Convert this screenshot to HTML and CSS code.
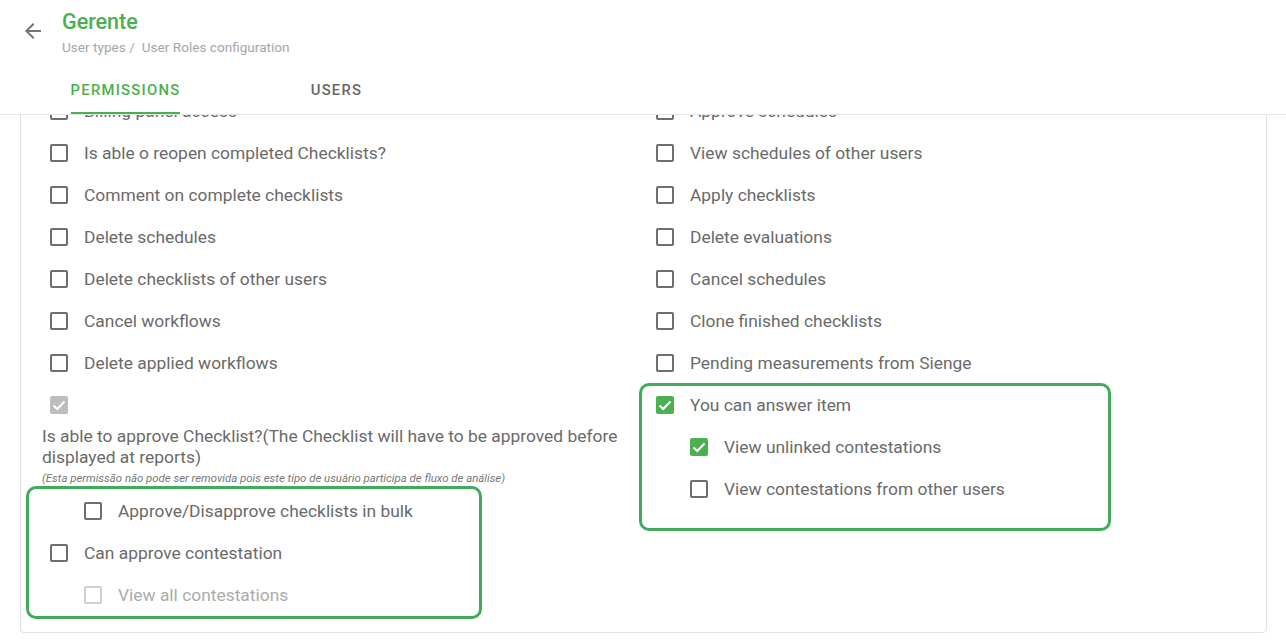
FILE: index.html
```html
<!DOCTYPE html>
<html lang="en">
<head>
<meta charset="utf-8">
<title>Gerente - User Roles configuration</title>
<link rel="stylesheet" href="styles.css">
</head>
<body>
<header class="header">
  <div class="title-bar">
    <button class="back" aria-label="Back">
      <svg width="24" height="24" viewBox="0 0 24 24"><path d="M20 11H7.83l5.59-5.59L12 4l-8 8 8 8 1.41-1.41L7.83 13H20v-2z" fill="currentColor"/></svg>
    </button>
    <div class="titles">
      <h1 class="title">Gerente</h1>
      <div class="crumbs"><span>User types /</span><span class="crumb-current">User Roles configuration</span></div>
    </div>
  </div>
  <nav class="tabs">
    <div class="tab active"><span class="tab-label">PERMISSIONS</span></div>
    <div class="tab"><span class="tab-label">USERS</span></div>
  </nav>
</header>

<main class="scroller">
  <section class="card">
    <div class="columns">
      <div class="col">
        <label class="row"><span class="cb"></span><span class="txt">Billing panel access</span></label>
        <label class="row"><span class="cb"></span><span class="txt">Is able o reopen completed Checklists?</span></label>
        <label class="row"><span class="cb"></span><span class="txt">Comment on complete checklists</span></label>
        <label class="row"><span class="cb"></span><span class="txt">Delete schedules</span></label>
        <label class="row"><span class="cb"></span><span class="txt">Delete checklists of other users</span></label>
        <label class="row"><span class="cb"></span><span class="txt">Cancel workflows</span></label>
        <label class="row"><span class="cb"></span><span class="txt">Delete applied workflows</span></label>
        <div class="row"><span class="cb checked disabled"><svg viewBox="0 0 18 18"><polyline points="3.5,9.5 7.2,13 14.5,5.5"/></svg></span></div>
        <p class="long-label">Is able to approve Checklist?(The Checklist will have to be approved before displayed at reports)</p>
        <p class="note">(Esta permissão não pode ser removida pois este tipo de usuário participa de fluxo de análise)</p>
        <label class="row sub"><span class="cb"></span><span class="txt">Approve/Disapprove checklists in bulk</span></label>
        <label class="row"><span class="cb"></span><span class="txt">Can approve contestation</span></label>
        <label class="row sub"><span class="cb disabled"></span><span class="txt muted">View all contestations</span></label>
      </div>
      <div class="col">
        <label class="row"><span class="cb"></span><span class="txt">Approve schedules</span></label>
        <label class="row"><span class="cb"></span><span class="txt">View schedules of other users</span></label>
        <label class="row"><span class="cb"></span><span class="txt">Apply checklists</span></label>
        <label class="row"><span class="cb"></span><span class="txt">Delete evaluations</span></label>
        <label class="row"><span class="cb"></span><span class="txt">Cancel schedules</span></label>
        <label class="row"><span class="cb"></span><span class="txt">Clone finished checklists</span></label>
        <label class="row"><span class="cb"></span><span class="txt">Pending measurements from Sienge</span></label>
        <label class="row"><span class="cb checked"><svg viewBox="0 0 18 18"><polyline points="3.5,9.5 7.2,13 14.5,5.5"/></svg></span><span class="txt">You can answer item</span></label>
        <label class="row sub"><span class="cb checked"><svg viewBox="0 0 18 18"><polyline points="3.5,9.5 7.2,13 14.5,5.5"/></svg></span><span class="txt">View unlinked contestations</span></label>
        <label class="row sub"><span class="cb"></span><span class="txt">View contestations from other users</span></label>
      </div>
    </div>
    <div class="highlight hl-left"></div>
    <div class="highlight hl-right"></div>
  </section>
</main>
</body>
</html>
```

FILE: styles.css
```css
* { box-sizing: border-box; }

html, body {
  margin: 0;
  padding: 0;
  height: 100%;
  background: #fff;
  font-family: Roboto, "Liberation Sans", Arial, sans-serif;
  color: #666;
  overflow: hidden;
}

.header {
  height: 115px;
  border-bottom: 1px solid #e6e6e6;
  background: #fff;
  display: flex;
  flex-direction: column;
}

.title-bar {
  height: 66px;
  display: flex;
  align-items: flex-start;
}

.back {
  margin: 19px 0 0 21px;
  width: 24px;
  height: 24px;
  padding: 0;
  border: 0;
  background: none;
  color: #757575;
  display: flex;
}

.titles {
  margin-left: 17px;
  padding-top: 9px;
}

.title {
  margin: 0;
  font-size: 21.5px;
  line-height: 26px;
  font-weight: 500;
  color: #4caf50;
}

.crumbs {
  margin-top: 4px;
  font-size: 13.6px;
  line-height: 16px;
  color: #a6a6a6;
  display: flex;
  gap: 7px;
}

.tabs {
  height: 48px;
  display: flex;
  padding-left: 20px;
}

.tab {
  width: 211px;
  display: flex;
  justify-content: center;
}

.tab-label {
  display: flex;
  align-items: center;
  font-size: 14.8px;
  font-weight: 500;
  letter-spacing: 1.25px;
  color: #666;
  padding-top: 2px;
  border-bottom: 2px solid transparent;
}

.tab.active .tab-label {
  color: #4caf50;
  border-bottom-color: #4caf50;
}

.scroller {
  height: 527px;
  overflow: hidden;
}

.card {
  position: relative;
  margin: -41px 19px 0 20px;
  border: 1px solid #e0e0e0;
  border-radius: 4px;
  padding: 15px 16px 16px 21px;
}

.columns {
  display: grid;
  grid-template-columns: 606px 1fr;
}

.col {
  display: flex;
  flex-direction: column;
}

.row {
  height: 42px;
  display: flex;
  align-items: center;
  padding-left: 8px;
}

.row.sub {
  padding-left: 42px;
}

.cb {
  width: 18px;
  height: 18px;
  flex: none;
  border: 2px solid #6e6e6e;
  border-radius: 2px;
  display: flex;
  align-items: center;
  justify-content: center;
}

.cb svg {
  width: 18px;
  height: 18px;
  flex: none;
}

.cb svg polyline {
  fill: none;
  stroke: #fff;
  stroke-width: 2;
}

.cb.checked {
  border: 0;
  background: #4caf50;
}

.cb.checked.disabled {
  background: #bdbdbd;
}

.cb.disabled {
  border-color: #cfcfcf;
}

.txt {
  margin-left: 16px;
  font-size: 17.4px;
  line-height: 21px;
  color: #6a6a6a;
}

.txt.muted {
  color: #ababab;
}

.long-label {
  margin: 0;
  font-size: 17.4px;
  line-height: 21px;
  color: #6a6a6a;
}

.note {
  margin: 0;
  height: 22px;
  font-size: 11.4px;
  line-height: 21px;
  font-style: italic;
  color: #777;
}

.highlight {
  position: absolute;
  border: 3px solid #41aa5d;
  border-radius: 10px;
  pointer-events: none;
}

.hl-left {
  left: 5px;
  top: 411px;
  width: 456px;
  height: 133px;
}

.hl-right {
  left: 618px;
  top: 308px;
  width: 472px;
  height: 148px;
}
```
